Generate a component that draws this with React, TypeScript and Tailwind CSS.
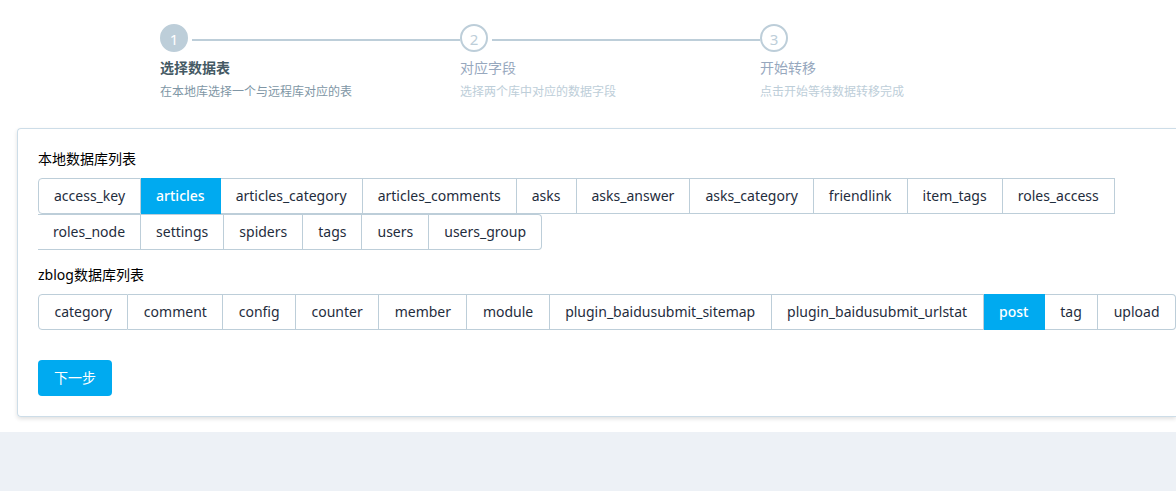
import { useState } from "react";

const steps = [
  { title: "选择数据表", description: "在本地库选择一个与远程库对应的表" },
  { title: "对应字段", description: "选择两个库中对应的数据字段" },
  { title: "开始转移", description: "点击开始等待数据转移完成" },
];

const localTables = [
  "access_key",
  "articles",
  "articles_category",
  "articles_comments",
  "asks",
  "asks_answer",
  "asks_category",
  "friendlink",
  "item_tags",
  "roles_access",
  "roles_node",
  "settings",
  "spiders",
  "tags",
  "users",
  "users_group",
];

const zblogTables = [
  "category",
  "comment",
  "config",
  "counter",
  "member",
  "module",
  "plugin_baidusubmit_sitemap",
  "plugin_baidusubmit_urlstat",
  "post",
  "tag",
  "upload",
];

function Steps({ current }: { current: number }) {
  return (
    <ol className="flex pl-40">
      {steps.map((step, index) => {
        const active = index === current;
        return (
          <li key={step.title} className="w-[300px] shrink-0">
            <div className="flex items-center gap-1">
              <span
                className={`flex size-7 shrink-0 items-center justify-center rounded-full border-2 border-[#bdced9] pt-0.5 text-[15px] leading-5 ${
                  active ? "bg-[#bdced9] text-white" : "bg-white text-[#bdced9]"
                }`}
              >
                {index + 1}
              </span>
              {index < steps.length - 1 && (
                <span className="mt-1 h-0.5 flex-1 bg-[#bdced9]" />
              )}
            </div>
            <div
              className={`mt-1 text-sm leading-6 ${
                active ? "font-bold text-[#455a64]" : "text-[#97a8be]"
              }`}
            >
              {step.title}
            </div>
            <div
              className={`text-xs leading-6 ${active ? "text-[#8096a5]" : "text-[#bdced9]"}`}
            >
              {step.description}
            </div>
          </li>
        );
      })}
    </ol>
  );
}

interface TableGroupProps {
  name: string;
  label: string;
  options: string[];
  value: string;
  fill?: boolean;
  onChange: (value: string) => void;
}

function TableGroup({ name, label, options, value, fill = false, onChange }: TableGroupProps) {
  return (
    <fieldset className="min-w-0">
      <legend className="text-sm leading-5 text-black">{label}</legend>
      <div className="mt-[9px] flex flex-wrap">
        {options.map((option) => (
          <label
            key={option}
            className={`h-9 cursor-pointer border border-l-0 border-[#bdced9] px-[15px] text-center text-sm leading-[34px] text-[#1f2d3d] first:rounded-l first:border-l last:rounded-r has-checked:border-[#00aaf0] has-checked:bg-[#00aaf0] has-checked:font-medium has-checked:text-white ${
              fill ? "grow" : ""
            }`}
          >
            <input
              type="radio"
              name={name}
              value={option}
              checked={value === option}
              onChange={() => onChange(option)}
              className="sr-only"
            />
            {option}
          </label>
        ))}
      </div>
    </fieldset>
  );
}

export default function App() {
  const [local, setLocal] = useState("articles");
  const [remote, setRemote] = useState("post");

  return (
    <div className="min-h-screen overflow-x-hidden bg-[#edf1f6] font-['Noto_Sans','Noto_Sans_CJK_SC',sans-serif]">
      <main className="bg-white pt-6 pb-[15px] pl-[17px]">
        <div className="-ml-[17px]">
          <Steps current={0} />
        </div>
        <form
          onSubmit={(event) => event.preventDefault()}
          className="mt-6 rounded-l border border-r-0 border-[#cddde8] py-5 pl-5 shadow-[0_2px_4px_rgba(0,0,0,0.12)]"
        >
          <div className="flex flex-col gap-[15px]">
            <TableGroup
              name="local-table"
              label="本地数据库列表"
              options={localTables}
              value={local}
              onChange={setLocal}
            />
            <TableGroup
              name="zblog-table"
              label="zblog数据库列表"
              options={zblogTables}
              value={remote}
              fill
              onChange={setRemote}
            />
          </div>
          <button
            type="submit"
            className="mt-[30px] h-9 cursor-pointer rounded bg-[#00aaf0] px-4 text-sm text-white"
          >
            下一步
          </button>
        </form>
      </main>
    </div>
  );
}
